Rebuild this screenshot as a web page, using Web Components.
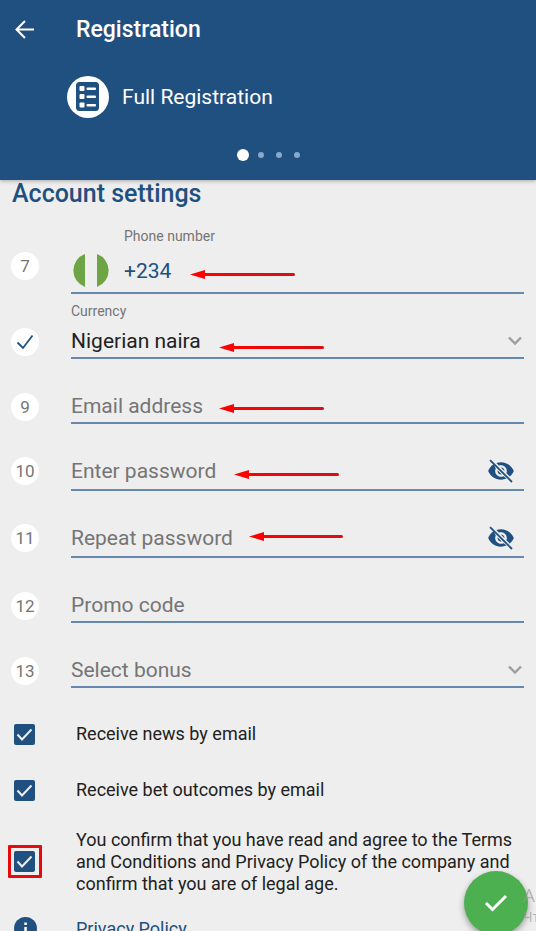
<!DOCTYPE html>
<html lang="en">
<head>
<meta charset="utf-8">
<meta name="viewport" content="width=device-width, initial-scale=1">
<title>Registration</title>
<style>
  :root {
    --brand: #20507f;
    --ink: #212121;
    --muted: #757575;
    --surface: #eeeeee;
    --mark: #e60a0f;
  }
  html { scrollbar-width: none; background: var(--surface); }
  body { margin: 0; font-family: Roboto, "Liberation Sans", sans-serif; color: var(--ink); }
</style>
</head>
<body>
<registration-page></registration-page>

<script>
const define = (name, html, setup) => {
  const template = document.createElement('template');
  template.innerHTML = html;
  customElements.define(name, class extends HTMLElement {
    connectedCallback() {
      if (this.shadowRoot) return;
      const root = this.attachShadow({ mode: 'open' });
      root.append(template.content.cloneNode(true));
      if (setup) setup(this, root);
    }
  });
};

define('app-header', `
  <style>
    :host { display: block; position: relative; z-index: 1; background: var(--brand); color: #fff; box-shadow: 0 1px 4px rgba(0,0,0,.3); }
    .bar { display: flex; align-items: center; height: 60px; padding: 0 12px; }
    button { width: 26px; height: 26px; padding: 0; border: 0; background: none; color: inherit; }
    button svg { display: block; }
    h1 { margin: 0 0 0 38px; font-size: 23px; line-height: 28px; font-weight: 500; }
    .mode { display: flex; align-items: center; gap: 13px; height: 42px; padding: 16px 0 0 67px; font-size: 21px; }
    nav { display: flex; align-items: center; justify-content: center; gap: 12px; height: 12px; padding: 31px 0 19px 4px; }
    i { width: 6px; height: 6px; border-radius: 50%; background: #89a7c9; }
    i.on { background: #fff; box-shadow: 0 0 0 3px #fff; }
  </style>
  <div class="bar">
    <button aria-label="Back"><svg width="26" height="26" viewBox="0 0 26 26" fill="none" stroke="currentColor" stroke-width="2"><path d="M22 12.500H5M13 4L4.500 12.500L13 21"/></svg></button>
    <h1><slot name="title"></slot></h1>
  </div>
  <div class="mode">
    <svg width="42" height="42" viewBox="0 0 42 42"><circle cx="21" cy="21" r="21" fill="#fff"/><rect x="9" y="6" width="23" height="29" rx="3.500" fill="#20507f"/><g fill="#fff"><rect x="12.500" y="10" width="5" height="5" rx="1"/><rect x="12.500" y="18" width="5" height="5" rx="1"/><rect x="12.500" y="26.500" width="5" height="5" rx="1"/><rect x="19.500" y="11.500" width="9.500" height="2.400" rx="1"/><rect x="19.500" y="19.500" width="9.500" height="2.400" rx="1"/><rect x="19.500" y="28" width="9.500" height="2.400" rx="1"/></g></svg>
    <slot name="mode"></slot>
  </div>
  <nav aria-label="Registration methods"><i class="on"></i><i></i><i></i><i></i></nav>
`);

define('step-badge', `
  <style>
    :host { display: grid; place-items: center; flex: none; width: 28px; height: 28px; border-radius: 50%; background: #fff; color: var(--muted); font-size: 17px; line-height: 28px; }
  </style>
  <slot></slot>
`, (host, root) => {
  if (host.hasAttribute('done')) {
    const mark = document.createElement('template');
    mark.innerHTML = '<svg width="28" height="28" viewBox="0 0 28 28" fill="none" stroke="#20507f" stroke-width="1.800" role="img" aria-label="Done"><path d="M6.500 14.500L12 20L21.500 7.500"/></svg>';
    root.querySelector('slot').replaceWith(mark.content);
  }
});

define('pointer-arrow', `
  <style>
    :host { display: block; position: absolute; left: var(--x); bottom: var(--y); width: var(--w, 105px); overflow: hidden; pointer-events: none; }
    .arrow { display: flex; align-items: center; }
    svg { display: block; flex: none; }
    .shaft { flex: 1; height: 3px; border-radius: 0 2px 2px 0; background: linear-gradient(90deg, #f00, #d51015); }
  </style>
  <div class="arrow"><svg width="15" height="9" viewBox="0 0 15 9"><path d="M0 4.500L15 0V9Z" fill="#f00"/></svg><div class="shaft"></div></div>
`);

define('form-field', `
  <style>
    :host { display: flex; align-items: flex-end; position: relative; height: 65px; padding: 0 12px 0 11px; }
    :host([kind=password]) { height: 67px; }
    :host([kind=tel]) { height: 86px; }
    step-badge { margin: 0 32px 3px 0; }
    :host([kind=password]) step-badge { margin-bottom: 6px; }
    :host([kind=tel]) step-badge { margin-bottom: 14px; }
    .box { flex: 1; min-width: 0; display: flex; align-items: center; border-bottom: 2px solid #6688ae; position: relative; }
    .text { flex: 1; min-width: 0; display: flex; flex-direction: column; }
    label { padding-bottom: 5px; color: var(--muted); font-size: 14px; line-height: 18px; }
    input, select { box-sizing: border-box; width: 100%; height: 32px; margin: 0; padding: 0; border: 0; outline: 0; background: none; appearance: none; font: 21px/28px Roboto, "Liberation Sans", sans-serif; color: var(--ink); }
    :host([kind=password]) input { height: 36px; }
    :host([kind=tel]) input { height: 42px; color: var(--brand); }
    :host([kind=tel]) .box { align-items: flex-end; }
    select.empty, input::placeholder { color: var(--muted); opacity: 1; }
    .flag { flex: none; margin: 0 15px 4px 1px; }
    button { flex: none; padding: 0; margin-right: 9px; border: 0; background: none; color: var(--brand); }
    svg { display: block; }
    .chevron { position: absolute; right: 1px; bottom: 11px; pointer-events: none; }
  </style>
  <step-badge></step-badge>
  <div class="box"><div class="text"></div></div>
  <slot></slot>
`, (host, root) => {
  const badge = root.querySelector('step-badge');
  const box = root.querySelector('.box');
  const text = root.querySelector('.text');
  const kind = host.getAttribute('kind') || 'text';
  const value = host.getAttribute('value');
  const name = host.getAttribute('label');
  if (host.hasAttribute('done')) {
    const done = document.createElement('step-badge');
    done.setAttribute('done', '');
    badge.replaceWith(done);
  } else badge.textContent = host.getAttribute('step');

  if (value) text.insertAdjacentHTML('beforeend', `<label for="control">${name}</label>`);
  if (kind === 'select') {
    text.insertAdjacentHTML('beforeend', `<select id="control" aria-label="${name}" class="${value ? '' : 'empty'}"><option>${value || name}</option></select>`);
    box.insertAdjacentHTML('beforeend', '<svg class="chevron" width="16" height="10" viewBox="0 0 16 10" fill="none" stroke="#9e9e9e" stroke-width="2.400"><path d="M2 1.500L8 7.500L14 1.500"/></svg>');
  } else {
    text.insertAdjacentHTML('beforeend', `<input id="control" type="${kind}" aria-label="${name}" ${value ? `value="${value}"` : `placeholder="${name}"`}>`);
  }
  if (kind === 'tel') {
    box.insertAdjacentHTML('afterbegin', '<svg class="flag" width="37" height="36" viewBox="0 0 37 36" role="img" aria-label="Nigeria"><path d="M13 2V35A17.500 17.500 0 0 1 13 2ZM25 2V35A17.500 17.500 0 0 0 25 2Z" fill="#6da544"/></svg>');
  }
  if (kind === 'password') {
    box.insertAdjacentHTML('beforeend', '<button type="button" aria-label="Show password"><svg width="28" height="28" viewBox="0 0 24 24" fill="currentColor"><path d="M12 7c2.760 0 5 2.240 5 5 0 .65-.13 1.260-.36 1.830l2.920 2.920c1.510-1.260 2.700-2.890 3.430-4.750-1.730-4.390-6-7.500-11-7.500-1.400 0-2.740.25-3.980.7l2.160 2.160C10.740 7.130 11.350 7 12 7z"/><path d="M5.700 6.300C3.500 7.700 1.900 9.700 1 12c1.730 4.390 6 7.500 11 7.500 1.700 0 3.300-.35 4.800-1l-2.600-2.030c-.67.33-1.410.53-2.200.53-2.760 0-5-2.240-5-5 0-.79.2-1.530.53-2.200zM11.840 9.020l3.150 3.150.02-.16c0-1.660-1.340-3-3-3zM9 11.300v.7c0 1.660 1.340 3 3 3h.7z"/><path d="M2.600 2.700L21.400 21.400" stroke="currentColor" stroke-width="1.600"/></svg></button>');
  }
});

define('check-row', `
  <style>
    :host { display: block; padding: 0 8px 0 14px; }
    label { display: flex; align-items: center; min-height: 56px; font-size: 18px; line-height: 22px; }
    :host([marked]) label { min-height: 87px; }
    .tick { display: grid; flex: none; position: relative; margin-right: 41px; }
    input { appearance: none; width: 21px; height: 21px; margin: 0; border-radius: 2px; }
    input:checked { background: var(--brand); }
    input, svg { grid-area: 1 / 1; }
    svg { pointer-events: none; }
    :host([marked]) .tick::after { content: ""; position: absolute; inset: -6px -7px -6px -6px; border: 3px solid var(--mark); border-radius: 1px; }
  </style>
  <label><span class="tick"><input type="checkbox" checked><svg width="21" height="21" viewBox="0 0 21 21" fill="none" stroke="#eee" stroke-width="2"><path d="M3.500 10.500L8 15.500L17.500 5.500"/></svg></span><span><slot></slot></span></label>
`);

define('info-link', `
  <style>
    :host { display: flex; align-items: center; gap: 39px; padding: 12px 8px 12px 14px; font-size: 18px; line-height: 22px; }
    svg { display: block; }
    a { color: var(--brand); text-decoration: none; }
  </style>
  <svg width="23" height="23" viewBox="0 0 23 23"><circle cx="11.500" cy="11.500" r="11.500" fill="#20507f"/><path d="M10.300 5.500h2.500v2.500h-2.500zM10.300 10h2.500v7.500h-2.500z" fill="#fff"/></svg>
  <a href="#privacy"><slot></slot></a>
`);

define('submit-button', `
  <style>
    :host { position: fixed; right: 8px; bottom: -4px; z-index: 2; }
    button { display: grid; place-items: center; width: 64px; height: 64px; padding: 0; border: 0; border-radius: 50%; background: #4caf50; box-shadow: 0 3px 6px rgba(0,0,0,.35); }
  </style>
  <button type="submit" aria-label="Submit"><svg width="26" height="22" viewBox="0 0 26 22" fill="none" stroke="#fff" stroke-width="3"><path d="M3 11L9.500 17.500L23 4"/></svg></button>
`);

define('edge-watermark', `
  <style>
    :host { position: fixed; right: 0; bottom: 4px; width: 13px; z-index: 3; overflow: hidden; white-space: nowrap; color: rgba(150,150,150,.65); font-family: "Open Sans", "Liberation Sans", sans-serif; pointer-events: none; }
    div { font-size: 19px; line-height: 24px; }
    div + div { font-size: 14px; line-height: 20px; }
  </style>
  <div>А</div><div>Чт</div>
`);

define('registration-page', `
  <style>
    :host { display: block; min-height: 100vh; background: var(--surface); }
    h2 { margin: 0; padding: 0 12px; font-size: 25px; line-height: 28px; font-weight: 500; color: var(--brand); }
    .options { padding-top: 18px; }
  </style>
  <app-header><span slot="title">Registration</span><span slot="mode">Full Registration</span></app-header>
  <main>
    <h2>Account settings</h2>
    <form-field step="7" kind="tel" label="Phone number" value="+234"><pointer-arrow style="--x:190px;--y:15px"></pointer-arrow></form-field>
    <form-field done kind="select" label="Currency" value="Nigerian naira"><pointer-arrow style="--x:219px;--y:7px"></pointer-arrow></form-field>
    <form-field step="9" label="Email address"><pointer-arrow style="--x:219px;--y:11px"></pointer-arrow></form-field>
    <form-field step="10" kind="password" label="Enter password"><pointer-arrow style="--x:234px;--y:12px"></pointer-arrow></form-field>
    <form-field step="11" kind="password" label="Repeat password"><pointer-arrow style="--x:249px;--y:17px;--w:94px"></pointer-arrow></form-field>
    <form-field step="12" label="Promo code"></form-field>
    <form-field step="13" kind="select" label="Select bonus"></form-field>
    <div class="options">
      <check-row>Receive news by email</check-row>
      <check-row>Receive bet outcomes by email</check-row>
      <check-row marked>You confirm that you have read and agree to the Terms and Conditions and Privacy Policy of the company and confirm that you are of legal age.</check-row>
      <info-link>Privacy Policy</info-link>
    </div>
  </main>
  <submit-button></submit-button>
  <edge-watermark></edge-watermark>
`);
</script>
</body>
</html>
